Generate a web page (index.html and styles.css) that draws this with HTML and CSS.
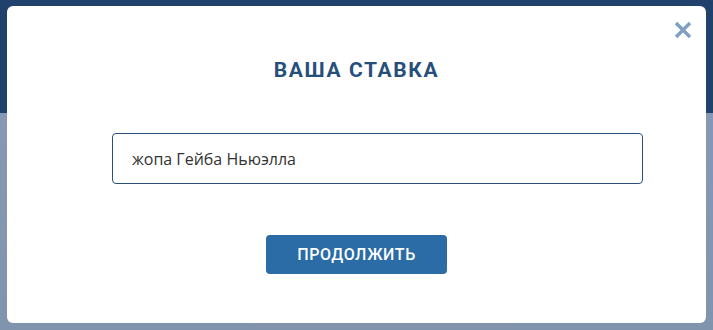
FILE: index.html
```html
<!DOCTYPE html>
<html lang="ru">
<head>
    <meta charset="utf-8">
    <title>Ваша ставка</title>
    <link rel="stylesheet" href="styles.css">
</head>
<body class="page">
    <div class="modal">
        <button class="close-btn" aria-label="Закрыть">
            <svg width="18" height="18" viewBox="0 0 18 18">
                <path d="M2 2 L16 16 M16 2 L2 16" stroke="#7da0c4" stroke-width="3.4" stroke-linecap="butt"/>
            </svg>
        </button>
        <h2 class="title">ВАША СТАВКА</h2>
        <form class="bet-form">
            <input type="text" class="bet-input" value="жопа Гейба Ньюэлла">
            <button type="submit" class="submit-btn">ПРОДОЛЖИТЬ</button>
        </form>
    </div>
</body>
</html>
```
FILE: styles.css
```css
.page {
    margin: 0;
    height: 330px;
    overflow: hidden;
    font-family: "Open Sans", "Liberation Sans", sans-serif;
    background: linear-gradient(to bottom, #1f416b 0, #1f416b 113px, #8698b3 113px, #8194ae 330px);
    padding: 6px 7px 0 7px;
    box-sizing: border-box;
}

.modal {
    position: relative;
    background: #fff;
    border-radius: 6px;
    height: 317px;
    display: flex;
    flex-direction: column;
    align-items: center;
}

.close-btn {
    position: absolute;
    top: 15px;
    right: 14px;
    border: none;
    background: none;
    padding: 0;
    cursor: pointer;
}

.title {
    margin: 50px 0 0 0;
    font-family: Roboto, "Liberation Sans", sans-serif;
    font-weight: bold;
    font-size: 21px;
    letter-spacing: 1.6px;
    color: #274f7c;
    line-height: 28px;
}

.bet-form {
    display: flex;
    flex-direction: column;
    align-items: center;
    width: 100%;
}

.bet-input {
    margin-top: 49px;
    margin-left: 42px;
    width: 531px;
    height: 51px;
    box-sizing: border-box;
    border: 1px solid #2a5079;
    border-radius: 4px;
    padding: 0 19px;
    font-family: "Open Sans", "Liberation Sans", sans-serif;
    font-size: 16px;
    color: #333;
}

.submit-btn {
    margin-top: 51px;
    width: 181px;
    height: 39px;
    border: none;
    border-radius: 4px;
    background: #2b6ba6;
    color: #fff;
    font-family: Roboto, "Liberation Sans", sans-serif;
    font-weight: 500;
    font-size: 16px;
    letter-spacing: 0.6px;
    cursor: pointer;
}
```
